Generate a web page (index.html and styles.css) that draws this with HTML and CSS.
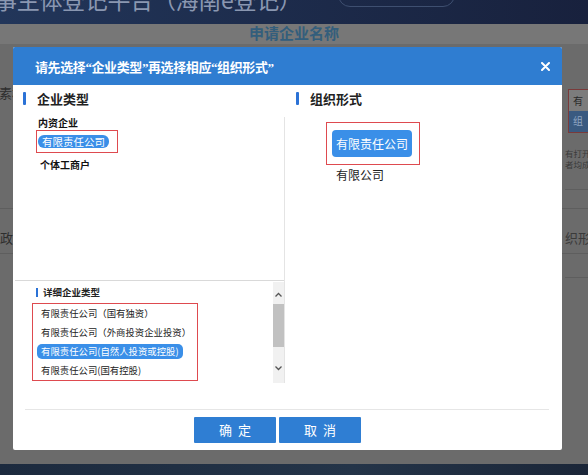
FILE: index.html
```html
<!DOCTYPE html>
<html lang="zh-CN">
<head>
<meta charset="utf-8">
<title>申请企业名称</title>
<link rel="stylesheet" href="styles.css">
</head>
<body>
<div class="page">
  <div class="topbar">
    <div class="site-title">事主体登记平台（海南e登记）</div>
    <div class="search-box"></div>
  </div>
  <div class="subbar">申请企业名称</div>
  <div class="bg-body">
    <div class="bg-row bg-row1">
      <div class="frag-left"><span class="frag-text">素材</span></div>
      <div class="frag-right">
        <div class="frag-box">
          <div class="frag-box-top">有</div>
          <div class="frag-box-bottom">组</div>
        </div>
        <div class="frag-lines">
          <div class="frag-line">有打开企</div>
          <div class="frag-line">者均成</div>
        </div>
        <div class="frag-rule"></div>
      </div>
    </div>
    <div class="bg-row bg-row2">
      <div class="frag-left"><span class="frag-text">政</span></div>
      <div class="frag-right"><span class="frag-text">织形式</span></div>
    </div>
    <div class="bg-row bg-row3">
      <div class="frag-left"></div>
      <div class="frag-right"><div class="frag-rule2"></div></div>
    </div>
  </div>
  <div class="footer-strip"></div>

  <div class="modal">
    <div class="modal-header">
      <span class="modal-title">请先选择“企业类型”再选择相应“组织形式”</span>
      <span class="modal-close" aria-label="关闭">
        <svg width="9" height="9" viewBox="0 0 9 9"><path d="M1 1 L8 8 M8 1 L1 8" stroke="#fff" stroke-width="2" stroke-linecap="round"/></svg>
      </span>
    </div>
    <div class="modal-body">
      <div class="col-left">
        <div class="sec-head"><span class="sec-bar"></span><span class="sec-text">企业类型</span></div>
        <div class="left-main">
          <div class="type-list">
            <div class="type-group">内资企业</div>
            <div class="mark-box mark-small"><span class="chip">有限责任公司</span></div>
            <div class="type-group type-group2">个体工商户</div>
          </div>
          <div class="detail">
            <div class="detail-content">
              <div class="detail-head"><span class="detail-bar"></span><span>详细企业类型</span></div>
              <div class="mark-box detail-box">
                <div class="detail-item">有限责任公司（国有独资）</div>
                <div class="detail-item">有限责任公司（外商投资企业投资）</div>
                <div class="detail-item detail-item-active">有限责任公司(自然人投资或控股)</div>
                <div class="detail-item">有限责任公司(国有控股)</div>
              </div>
            </div>
            <div class="scrollbar">
              <svg class="sb-arrow" width="11" height="10" viewBox="0 0 11 10"><path d="M2.5 6.5 L5.5 3.5 L8.5 6.5" fill="none" stroke="#555" stroke-width="1.3"/></svg>
              <div class="sb-thumb"></div>
              <div class="sb-fill"></div>
              <svg class="sb-arrow" width="11" height="10" viewBox="0 0 11 10"><path d="M2.5 3.5 L5.5 6.5 L8.5 3.5" fill="none" stroke="#555" stroke-width="1.3"/></svg>
            </div>
          </div>
        </div>
      </div>
      <div class="col-right">
        <div class="sec-head sec-head-right"><span class="sec-bar"></span><span class="sec-text">组织形式</span></div>
        <div class="org-list">
          <div class="mark-box org-box"><span class="org-btn">有限责任公司</span></div>
          <div class="org-item">有限公司</div>
        </div>
      </div>
    </div>
    <div class="modal-footer">
      <button class="btn">确定</button>
      <button class="btn">取消</button>
    </div>
  </div>
</div>
</body>
</html>
```
FILE: styles.css
```css
* { box-sizing: border-box; }
html, body { margin: 0; padding: 0; }
body {
  font-family: "Noto Sans CJK SC", "Noto Sans", sans-serif;
  background: #6b6b6b;
}
.page {
  position: relative;
  width: 588px;
  height: 475px;
  overflow: hidden;
  background: #6b6b6b;
  display: flex;
  flex-direction: column;
}

/* background page (dimmed) */
.topbar {
  height: 24px;
  flex: none;
  display: flex;
  align-items: flex-start;
  overflow: hidden;
  background: linear-gradient(90deg, #22365a 0%, #1d2c4c 45%, #18213d 100%);
}
.site-title {
  margin-top: -13px;
  margin-left: -6px;
  font-size: 23px;
  line-height: 24px;
  color: #8a97b1;
  white-space: nowrap;
  letter-spacing: -0.3px;
}
.search-box {
  margin-top: -20px;
  margin-left: 36px;
  width: 117px;
  height: 27px;
  border: 1px solid #3e4f70;
  border-radius: 12px;
}
.subbar {
  height: 20px;
  flex: none;
  background: #777777;
  text-align: center;
  font-family: "Liberation Serif", "Noto Sans CJK SC", serif;
  font-weight: bold;
  font-size: 15px;
  line-height: 20px;
  color: #335e7c;
}
.bg-body {
  flex: 1;
  display: flex;
  flex-direction: column;
}
.bg-row {
  display: flex;
  justify-content: space-between;
  border-bottom: 1px solid #5e5e5e;
}
.bg-row1 { height: 165px; }
.bg-row2 { height: 45px; }
.bg-row3 { flex: 1; border-bottom: none; }
.frag-left { width: 40px; overflow: hidden; }
.frag-right { width: 23px; overflow: hidden; }
.frag-text {
  display: block;
  font-size: 13px;
  line-height: 14px;
  color: #2e2e2e;
  white-space: nowrap;
}
.bg-row1 .frag-left .frag-text { margin-top: 42px; margin-left: -1px; }
.bg-row2 .frag-text { margin-top: 22px; }
.bg-row2 .frag-right .frag-text { color: #3a3a3a; }
.frag-box {
  margin-top: 45px;
  margin-left: 3px;
  width: 24px;
  height: 44px;
  border: 1px solid #7a3a3a;
  display: flex;
  flex-direction: column;
}
.frag-box-top {
  height: 21px;
  background: #7c7c7c;
  font-size: 10px;
  line-height: 21px;
  padding-left: 4px;
  color: #2a2a2a;
}
.frag-box-bottom {
  flex: 1;
  background: #3a5a80;
  font-size: 10px;
  line-height: 20px;
  padding-left: 4px;
  color: #8ea4c0;
}
.frag-lines {
  margin-top: 15px;
  display: flex;
  flex-direction: column;
  gap: 1px;
}
.frag-line {
  height: 10px;
  font-size: 8.5px;
  line-height: 10px;
  color: #3a3a3a;
  white-space: nowrap;
  overflow: hidden;
}
.frag-rule {
  margin-top: 20px;
  border-bottom: 1px solid #5e5e5e;
}
.frag-rule2 {
  margin-top: 23px;
  border-bottom: 1px solid #5e5e5e;
}
.footer-strip {
  height: 11px;
  flex: none;
  background: linear-gradient(90deg, #1c2a3e, #243448 60%, #1b2638);
}

/* modal */
.modal {
  position: absolute;
  left: 13px;
  top: 47px;
  width: 549px;
  height: 403px;
  background: #fff;
  border-radius: 2px;
  display: flex;
  flex-direction: column;
  overflow: hidden;
}
.modal-header {
  height: 38px;
  flex: none;
  background: #2f7dd1;
  display: flex;
  align-items: center;
  justify-content: space-between;
  padding: 0 12px 0 22px;
}
.modal-title {
  color: #fff;
  font-family: "Liberation Serif", "Noto Sans CJK SC", serif;
  font-size: 13px;
  font-weight: bold;
  letter-spacing: -0.4px;
}
.modal-close {
  display: flex;
  width: 10px;
  height: 10px;
  align-items: center;
  justify-content: center;
}
.modal-body {
  height: 324px;
  flex: none;
  display: grid;
  grid-template-columns: 272px 1fr;
}
.sec-head {
  height: 26px;
  display: flex;
  align-items: center;
  padding-left: 10px;
}
.sec-bar {
  width: 3px;
  height: 13px;
  background: #2b72d6;
  border-radius: 1px;
}
.sec-text {
  margin-left: 11px;
  font-size: 13px;
  font-weight: bold;
  color: #222;
}
.sec-head-right { padding-left: 11px; }
.sec-head-right .sec-text { margin-left: 11px; }

.left-main {
  margin-top: 6px;
  height: 266px;
  border-right: 1px solid #e4e4e4;
  display: flex;
  flex-direction: column;
}
.type-list {
  height: 164px;
  margin-left: 2px;
  border-bottom: 1px solid #d9d9d9;
  padding-left: 23px;
  display: flex;
  flex-direction: column;
  align-items: flex-start;
}
.type-group {
  font-size: 10px;
  font-weight: bold;
  line-height: 12px;
  color: #111;
}
.type-group2 { margin-top: 6px; margin-left: 2px; }
.mark-box { border: 1px solid #de4a4f; }
.mark-small {
  margin-top: 1px;
  margin-left: -2px;
  padding: 4px 8px 4px 1px;
  display: flex;
}
.chip {
  display: inline-block;
  height: 13px;
  line-height: 13px;
  padding: 0 4px;
  font-size: 10.5px;
  background: #3a8fe8;
  color: #fff;
  border-radius: 6px;
}
.detail {
  flex: 1;
  display: flex;
}
.detail-content {
  flex: 1;
  padding-left: 19px;
}
.detail-head {
  margin-top: 5px;
  margin-left: 4px;
  height: 12px;
  display: flex;
  align-items: center;
  font-size: 9.5px;
  font-weight: bold;
  color: #222;
}
.detail-bar {
  width: 2px;
  height: 9px;
  background: #2b72d6;
  margin-right: 5px;
}
.detail-box {
  margin-top: 5px;
  width: 166px;
  padding: 2px 0 2px 4px;
  display: flex;
  flex-direction: column;
  align-items: flex-start;
  gap: 4px;
}
.detail-item {
  height: 15px;
  line-height: 15px;
  padding: 0 4px;
  font-size: 9.4px;
  color: #222;
  white-space: nowrap;
}
.detail-item-active {
  background: #3a8fe8;
  color: #fff;
  border-radius: 5px;
}
.scrollbar {
  width: 11px;
  margin-top: 1px;
  background: #f1f1f1;
  display: flex;
  flex-direction: column;
}
.sb-arrow { display: block; flex: none; margin-top: 8px; }
.sb-thumb {
  margin-top: 4px;
  height: 43px;
  background: #c1c1c1;
  flex: none;
}
.sb-fill { flex: 1; }
.scrollbar .sb-arrow:last-child { margin-top: 0; margin-bottom: 10px; }

.col-right { display: flex; flex-direction: column; }
.org-list {
  padding-left: 41px;
  padding-top: 11px;
  display: flex;
  flex-direction: column;
  align-items: flex-start;
}
.org-box {
  padding: 7px 7px 7px 5px;
  display: flex;
}
.org-btn {
  display: inline-block;
  height: 27px;
  line-height: 27px;
  padding: 0 4px;
  font-size: 12px;
  background: #3a8fe8;
  color: #fff;
  border-radius: 4px;
}
.org-item {
  margin-top: 2px;
  margin-left: 10px;
  font-size: 12px;
  line-height: 16px;
  color: #222;
}

.modal-footer {
  flex: 1;
  margin: 0 13px 0 12px;
  border-top: 1px solid #e6e6e6;
  display: flex;
  align-items: flex-start;
  padding-top: 7px;
  padding-left: 169px;
  gap: 3px;
}
.btn {
  width: 82px;
  height: 26px;
  border: none;
  border-radius: 1px;
  background: #2f7ed3;
  color: #fff;
  font-family: "Noto Sans CJK SC", sans-serif;
  font-size: 13px;
  letter-spacing: 6px;
  padding: 0 0 0 6px;
  line-height: 26px;
}
```
